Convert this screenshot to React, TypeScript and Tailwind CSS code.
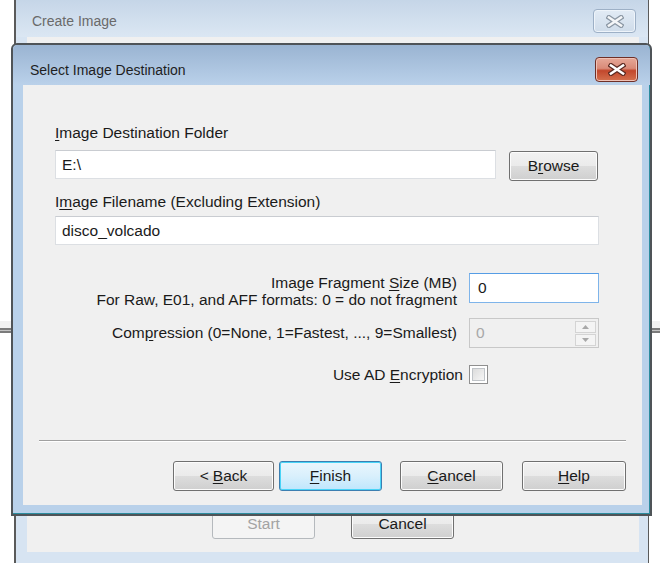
import React from "react";

function CloseGlyph({ dark = "#4a4a4a", fill = "#ffffff" }: { dark?: string; fill?: string }) {
  return (
    <svg width="18" height="13" viewBox="0 0 18 13">
      <path d="M3 2.5 L15 10.5 M15 2.5 L3 10.5" stroke={dark} strokeWidth="5" strokeLinecap="square" />
      <path d="M3 2.5 L15 10.5 M15 2.5 L3 10.5" stroke={fill} strokeWidth="2.6" strokeLinecap="square" />
    </svg>
  );
}

function WinButton({
  children,
  w,
  focused = false,
  disabled = false,
  className = "",
}: {
  children: React.ReactNode;
  w: string;
  focused?: boolean;
  disabled?: boolean;
  className?: string;
}) {
  const base =
    "h-[30px] rounded-[3px] border flex items-center justify-center text-[15.5px] leading-none shrink-0 ";
  const look = disabled
    ? "border-[#b5b9bd] bg-[#f4f4f4] text-[#a3a3a3]"
    : focused
    ? "border-[#3c7fb1] bg-gradient-to-b from-[#eaf6fd] via-[#d9f0fc] to-[#bee6fd] shadow-[inset_0_0_0_1px_#48d4f7] text-[#1a1a1a]"
    : "border-[#707070] bg-[linear-gradient(to_bottom,#f2f2f2_0%,#ebebeb_50%,#dddddd_51%,#cfcfcf_100%)] shadow-[inset_0_0_0_1px_#fcfcfc] text-[#1a1a1a]";
  return <div className={base + look + " " + w + " " + className}>{children}</div>;
}

export default function App() {
  return (
    <div className="relative w-[660px] h-[563px] overflow-hidden bg-white font-['Liberation_Sans',Arial,sans-serif] text-[#1a1a1a]">
      {/* separator lines of the window far behind */}
      <div className="absolute left-0 top-[321px] w-full h-[7px] bg-[#f1f1f1]" />
      <div className="absolute left-0 top-[328px] w-full h-[5px] border-y-2 border-[#7b7b7b] bg-[#c4c4c4]" />

      {/* back window: Create Image */}
      <div className="absolute left-[14px] top-[-6px] w-[635px] h-[580px] border-l-2 border-r border-[#5a5a5a] bg-[#d7e4f2] flex flex-col">
        <div className="h-[43px] shrink-0 bg-gradient-to-b from-[#c2d3e6] to-[#dbe7f3] flex items-start justify-between pt-[15px] pl-[16px] pr-[12px]">
          <div className="mt-[3px] h-[18px] leading-[18px] text-[14px] text-[#6a6a6a]">Create Image</div>
          <div className="w-[43px] h-[24px] rounded-[4px] border border-[#9db0c6] bg-gradient-to-b from-[#e2ebf5] to-[#cfdcea] flex items-center justify-center shadow-[inset_0_0_0_1px_#eef4fa]">
            <CloseGlyph dark="#8a96a3" fill="#f4f6f8" />
          </div>
        </div>
        <div className="flex-1 ml-[11px] mr-[9px] mb-[22px] bg-[#f0f0f0] flex items-end justify-center gap-[36px] pb-[13px]">
          <WinButton w="w-[103px]" disabled className="h-[28px]">
            Start
          </WinButton>
          <WinButton w="w-[103px]" className="h-[28px]">
            Cancel
          </WinButton>
        </div>
      </div>

      {/* front dialog: Select Image Destination */}
      <div className="absolute left-[11px] top-[43px] w-[641px] h-[473px] border-2 border-[#4f5458] rounded-t-[6px] bg-[#b9d1ea] shadow-[inset_-1px_-1px_0_#2b8c9e] flex flex-col">
        <div className="h-[40px] shrink-0 rounded-t-[5px] bg-gradient-to-b from-[#9ab4d2] to-[#bad1ea] flex items-start justify-between pl-[17px] pr-[12px] pt-[12px]">
          <div className="mt-[4px] h-[18px] leading-[18px] text-[14px] text-[#1e1e1e]">Select Image Destination</div>
          <div className="w-[43px] h-[25px] rounded-[4px] border border-[#6f2f27] bg-[linear-gradient(to_bottom,#e6a898_0%,#d98a78_45%,#c2472c_55%,#d4714f_100%)] flex items-center justify-center shadow-[inset_0_0_0_1px_#f0c2b6]">
            <CloseGlyph dark="#5c2a22" fill="#ffffff" />
          </div>
        </div>

        <div className="flex-1 ml-[10px] mr-[8px] mb-[9px] bg-[#f0f0f0] flex flex-col pl-[32px] pr-[43px] pt-[39px] text-[15.5px]">
          <div className="h-[18px] leading-[18px]">
            <u className="underline-offset-2">I</u>mage Destination Folder
          </div>
          <div className="mt-[8px] h-[29px] flex items-start">
            <div className="w-[441px] h-[29px] bg-white border border-[#dcdfe3] border-t-[#c9ccd1] flex items-center pl-[6px]">E:\</div>
            <WinButton w="w-[89px]" className="ml-[13px] mt-[1px] h-[28px]">
              B<u className="underline-offset-2">r</u>owse
            </WinButton>
          </div>

          <div className="mt-[14px] h-[18px] leading-[18px]">
            I<u className="underline-offset-2">m</u>age Filename (Excluding Extension)
          </div>
          <div className="mt-[5px] w-[544px] h-[29px] bg-white border border-[#dcdfe3] border-t-[#c9ccd1] flex items-center pl-[6px]">
            disco_volcado
          </div>

          <div className="mt-[28px] h-[30px] flex justify-end items-start gap-[12px]">
            <div className="text-right leading-[17px] pt-[1px]">
              <div>
                Image Fragment <u className="underline-offset-2">S</u>ize (MB)
              </div>
              <div>For Raw, E01, and AFF formats: 0 = do not fragment</div>
            </div>
            <div className="w-[130px] h-[30px] bg-white border border-[#7eb4ea] border-t-[#569de5] flex items-center pl-[8px]">0</div>
          </div>

          <div className="mt-[15px] h-[30px] flex justify-end items-center gap-[12px]">
            <div>
              Com<u className="underline-offset-2">p</u>ression (0=None, 1=Fastest, ..., 9=Smallest)
            </div>
            <div className="w-[130px] h-[30px] bg-[#f0f0f0] border border-[#c8c8c8] flex items-center justify-between pl-[6px] pr-[2px] text-[#a8a8a8]">
              <span>0</span>
              <div className="flex flex-col gap-[1px]">
                <div className="w-[21px] h-[12px] border border-[#d4d4d4] bg-[#f4f4f4] flex items-center justify-center">
                  <svg width="7" height="4" viewBox="0 0 7 4">
                    <path d="M0 4 L3.5 0 L7 4 Z" fill="#a8a8a8" />
                  </svg>
                </div>
                <div className="w-[21px] h-[12px] border border-[#d4d4d4] bg-[#f4f4f4] flex items-center justify-center">
                  <svg width="7" height="4" viewBox="0 0 7 4">
                    <path d="M0 0 L7 0 L3.5 4 Z" fill="#a8a8a8" />
                  </svg>
                </div>
              </div>
            </div>
          </div>

          <div className="mt-[17px] h-[19px] flex justify-end items-center gap-[6px] pr-[111px]">
            <div>
              Use AD <u className="underline-offset-2">E</u>ncryption
            </div>
            <div className="w-[19px] h-[19px] border border-[#8f8f8f] bg-white p-[2px]">
              <div className="w-full h-full border border-[#c0c4c8] bg-gradient-to-br from-[#dcdcdc] to-[#f6f6f6]" />
            </div>
          </div>

          <div className="mt-[56px] -ml-[16px] -mr-[27px] h-[2px] border-t border-[#a0a0a0] border-b border-b-white" />

          <div className="mt-[19px] -mr-[27px] flex justify-end">
            <WinButton w="w-[101px]">
              &lt; <u className="underline-offset-2 ml-[4px]">B</u>ack
            </WinButton>
            <WinButton w="w-[103px]" focused className="ml-[5px]">
              <u className="underline-offset-2">F</u>inish
            </WinButton>
            <WinButton w="w-[103px]" className="ml-[18px]">
              <u className="underline-offset-2">C</u>ancel
            </WinButton>
            <WinButton w="w-[104px]" className="ml-[19px]">
              <u className="underline-offset-2">H</u>elp
            </WinButton>
          </div>
        </div>
      </div>
    </div>
  );
}
